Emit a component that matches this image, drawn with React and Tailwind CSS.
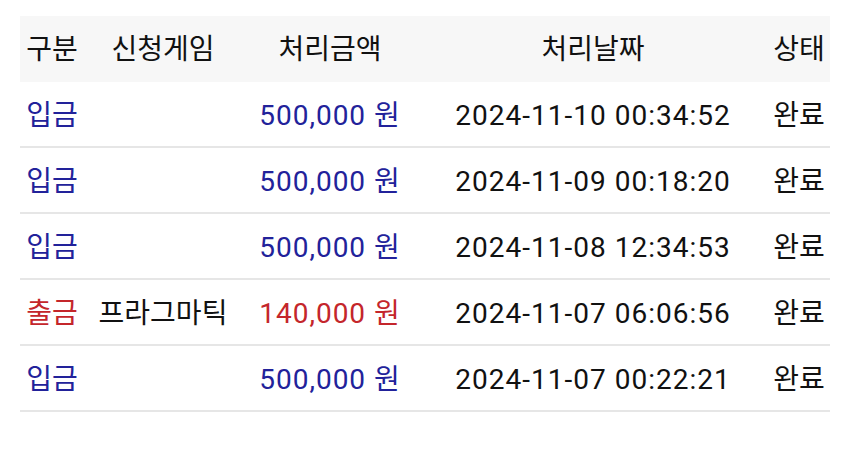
const rows = [
  { type: "입금", game: "", amount: "500,000 원", date: "2024-11-10 00:34:52", status: "완료" },
  { type: "입금", game: "", amount: "500,000 원", date: "2024-11-09 00:18:20", status: "완료" },
  { type: "입금", game: "", amount: "500,000 원", date: "2024-11-08 12:34:53", status: "완료" },
  { type: "출금", game: "프라그마틱", amount: "140,000 원", date: "2024-11-07 06:06:56", status: "완료" },
  { type: "입금", game: "", amount: "500,000 원", date: "2024-11-07 00:22:21", status: "완료" },
];

const cols = "grid grid-cols-[64px_158px_176px_350px_62px] items-center";

export default function App() {
  return (
    <div
      className="w-[850px] h-[475px] bg-white pt-4 px-5 text-[28px] leading-none text-[#111]"
      style={{ fontFamily: 'Roboto, "Noto Sans CJK KR", sans-serif' }}
    >
      <div className={`${cols} h-[66px] bg-[#f7f7f7] text-center pt-[2px]`}>
        <div>구분</div>
        <div>신청게임</div>
        <div>처리금액</div>
        <div>처리날짜</div>
        <div>상태</div>
      </div>
      {rows.map((r, i) => {
        const color = r.type === "출금" ? "text-[#c4262b]" : "text-[#22229a]";
        return (
          <div key={i} className={`${cols} h-[66px] border-b-2 border-[#e6e6e6] text-center pt-[4px]`}>
            <div className={color}>{r.type}</div>
            <div>{r.game}</div>
            <div className={`${color} tracking-[1px]`}>{r.amount}</div>
            <div className="tracking-[1px]">{r.date}</div>
            <div>{r.status}</div>
          </div>
        );
      })}
    </div>
  );
}
